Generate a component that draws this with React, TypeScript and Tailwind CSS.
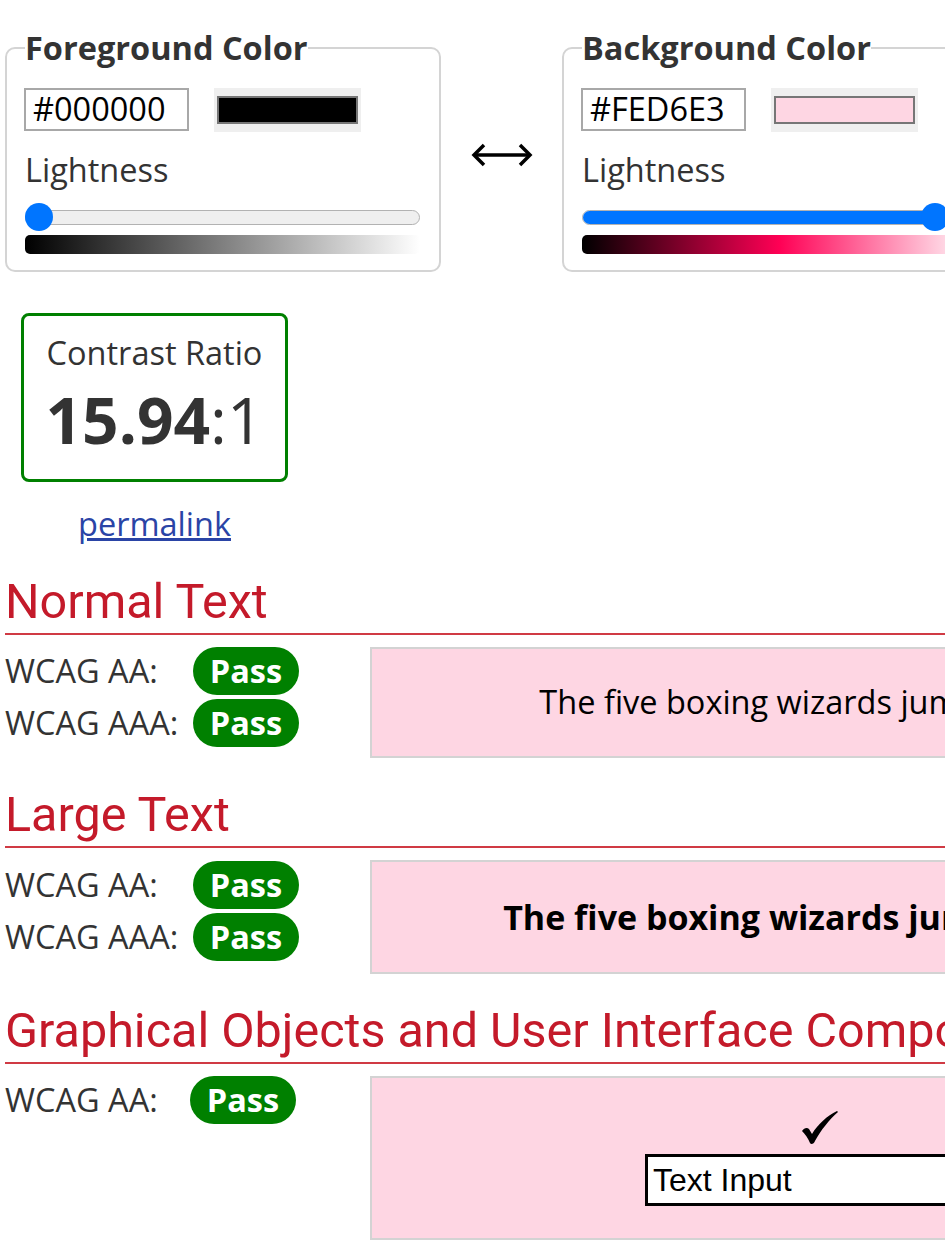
import React from 'react';

interface ColorBoxProps {
  title: string;
  hex: string;
  swatch: string;
  fill: string;
  thumb: string;
  gradient: string;
}

function ColorBox({ title, hex, swatch, fill, thumb, gradient }: ColorBoxProps) {
  return (
    <fieldset className="w-[436px] shrink-0 rounded-[10px] border-2 border-[#d4d4d4] pl-[18px] pr-[19px] pb-[16px]">
      <legend className="px-0 text-[32.5px] leading-[38px] font-bold text-[#333]">{title}</legend>

      {/* hex input + swatch */}
      <div className="mt-[21px] flex items-start">
        <div className="-ml-[1px] flex h-[43px] w-[165px] items-center border-2 border-[#a8a8a8] bg-white px-[7px] text-[32.5px] leading-none text-black">
          {hex}
        </div>
        <div className="ml-[25px] flex h-[44px] w-[147px] items-center bg-[#efefef] px-[3px]">
          <div className={`h-[28px] w-full border-2 border-[#767676] ${swatch}`} />
        </div>
      </div>

      <div className="mt-[18px] text-[32.5px] leading-[40px] text-[#333]">Lightness</div>

      {/* lightness slider */}
      <div className="relative mt-[13px] flex h-[28px] items-center">
        <div className="h-[15px] w-full overflow-hidden rounded-full border border-[#b2b2b2] bg-[#efefef]">
          <div className={`h-full bg-[#0075ff] ${fill}`} />
        </div>
        <div className={`absolute top-0 h-[28px] w-[28px] rounded-full bg-[#0075ff] ${thumb}`} />
      </div>
      <div className={`mt-[4px] h-[19px] w-full rounded-[5px] ${gradient}`} />
    </fieldset>
  );
}

function SectionTitle({ children }: { children: React.ReactNode }) {
  return (
    <h2 className="w-[1265px] border-b-2 border-[#d03a44] pb-[3px] font-['Roboto',sans-serif] text-[48.5px] leading-[56px] font-normal text-[#c41a2a]">
      {children}
    </h2>
  );
}

function PassRow({ label, labelW }: { label: string; labelW: string }) {
  return (
    <div className="flex h-[48px] items-center">
      <span className={`${labelW} text-[32.5px] leading-[40px] text-[#333]`}>{label}</span>
      <span className="flex h-[48px] w-[106px] items-center justify-center rounded-full bg-[#008000] text-[32.5px] leading-none font-bold text-white">
        Pass
      </span>
    </div>
  );
}

export default function App() {
  return (
    <div className="h-[1260px] w-[945px] overflow-hidden bg-white font-['Open_Sans',sans-serif]">
      <div className="w-[1300px] pl-[5px]">
        {/* color pickers */}
        <div className="flex items-start pt-[29px]">
          <ColorBox
            title="Foreground Color"
            hex="#000000"
            swatch="bg-black"
            fill="w-0"
            thumb="left-0"
            gradient="bg-[linear-gradient(to_right,#000,#fff)]"
          />
          <div className="flex w-[121px] shrink-0 justify-center pt-[113px]">
            <svg width="62" height="26" viewBox="0 0 62 26" fill="none" stroke="#000" strokeWidth="3.5">
              <path d="M3 13H59" />
              <path d="M13 3L3 13L13 23" />
              <path d="M49 3L59 13L49 23" />
            </svg>
          </div>
          <ColorBox
            title="Background Color"
            hex="#FED6E3"
            swatch="bg-[#fed6e3]"
            fill="w-[353px]"
            thumb="left-[339px]"
            gradient="bg-[linear-gradient(to_right,#000,#ff0055,#fff)]"
          />
        </div>

        {/* contrast ratio */}
        <div className="ml-[16px] mt-[41px] flex w-[267px] flex-col items-center">
          <div className="flex w-full flex-col items-center rounded-[8px] border-[3px] border-[#008000] pt-[17px] pb-[23px] text-[#333]">
            <div className="text-[32.5px] leading-[40px]">Contrast Ratio</div>
            <div className="mt-[11px] text-[64px] leading-[72px]">
              <span className="font-bold">15.94</span>:1
            </div>
          </div>
          <a href="#" className="mt-[22px] text-[32.5px] leading-[40px] text-[#2a44a6] underline">
            permalink
          </a>
        </div>

        {/* normal text */}
        <div className="mt-[30px]">
          <SectionTitle>Normal Text</SectionTitle>
          <div className="mt-[12px] flex items-start">
            <div className="flex w-[365px] shrink-0 flex-col gap-[4px]">
              <PassRow label="WCAG AA:" labelW="w-[188px]" />
              <PassRow label="WCAG AAA:" labelW="w-[188px]" />
            </div>
            <div className="flex h-[111px] w-[900px] shrink-0 items-center justify-center border-2 border-[#d3d3d3] bg-[#fed6e3] text-[32.5px] text-black">
              The five boxing wizards jump quickly.
            </div>
          </div>
        </div>

        {/* large text */}
        <div className="mt-[29px]">
          <SectionTitle>Large Text</SectionTitle>
          <div className="mt-[12px] flex items-start">
            <div className="flex w-[365px] shrink-0 flex-col gap-[4px] pt-[1px]">
              <PassRow label="WCAG AA:" labelW="w-[188px]" />
              <PassRow label="WCAG AAA:" labelW="w-[188px]" />
            </div>
            <div className="flex h-[114px] w-[900px] shrink-0 items-center justify-center border-2 border-[#d3d3d3] bg-[#fed6e3] text-[34px] font-bold text-black">
              The five boxing wizards jump quickly.
            </div>
          </div>
        </div>

        {/* graphical objects */}
        <div className="mt-[29px]">
          <SectionTitle>Graphical Objects and User Interface Components</SectionTitle>
          <div className="mt-[12px] flex items-start">
            <div className="flex w-[365px] shrink-0 flex-col">
              <PassRow label="WCAG AA:" labelW="w-[185px]" />
            </div>
            <div className="flex h-[164px] w-[900px] shrink-0 flex-col items-center border-2 border-[#d3d3d3] bg-[#fed6e3] pt-[33px]">
              <svg width="36" height="34" viewBox="0 0 36 34" fill="#000">
                <path d="M0 20C2 17 5 16 7 18L10 23C16 13 25 5 35 0L36 1C27 9 19 19 13 30C12 33 9 34 8 32C6 27 3 23 0 20Z" />
              </svg>
              <div className="mt-[9px] flex h-[52px] w-[350px] items-center border-[3px] border-black bg-white pl-[5px] font-['Liberation_Sans',Arial,sans-serif] text-[32px] text-black">
                Text Input
              </div>
            </div>
          </div>
        </div>
      </div>
    </div>
  );
}
